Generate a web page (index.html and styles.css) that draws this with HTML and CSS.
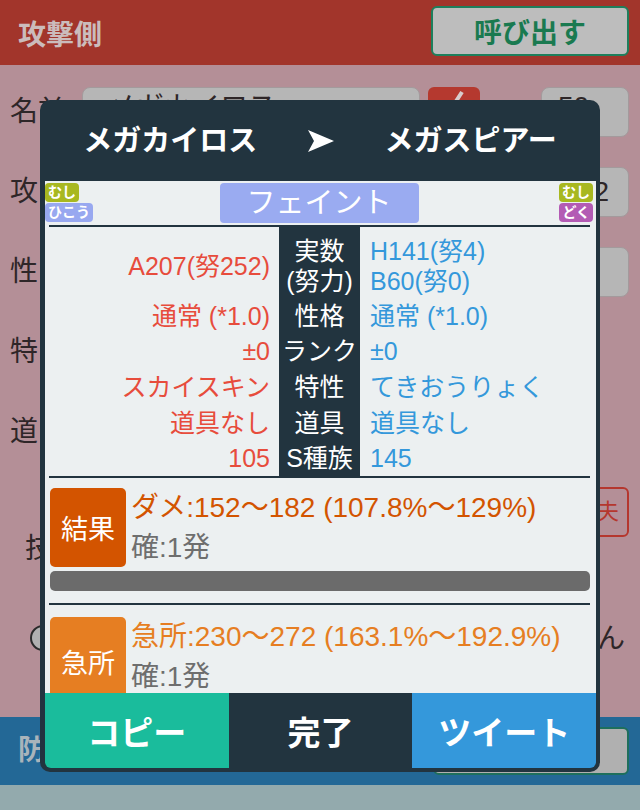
FILE: index.html
```html
<!DOCTYPE html>
<html lang="ja">
<head>
<meta charset="utf-8">
<title>ダメージ計算</title>
<link rel="stylesheet" href="styles.css">
</head>
<body>
<div class="page">
  <header class="topbar">
    <div class="bar-title">攻撃側</div>
    <div class="call-btn">呼び出す</div>
  </header>
  <div class="form">
    <div class="row first">
      <span class="label">名前</span>
      <span class="input name-input">メガカイロス</span>
      <span class="check"><svg width="30" height="30" viewBox="0 0 30 30"><polyline points="6,15 12,22 23,5" fill="none" stroke="#d8cccc" stroke-width="4"/></svg></span>
      <span class="dot">・</span>
      <span class="input small-input lvl">50</span>
    </div>
    <div class="row">
      <span class="label">攻</span>
      <span class="input small-input num">2</span>
    </div>
    <div class="row">
      <span class="label">性</span>
      <span class="input small-input num"></span>
    </div>
    <div class="row"><span class="label">特</span></div>
    <div class="row"><span class="label">道</span></div>
    <div class="move-row">
      <span class="label move-label">技</span>
      <span class="outline-btn">大丈夫</span>
    </div>
    <div class="radio-row">
      <span class="radio"></span>
      <span class="label">ん</span>
    </div>
  </div>
  <div class="defbar">
    <div class="bar-title def-title">防御側</div>
    <div class="call-btn def-btn"></div>
  </div>
  <div class="footer-band"></div>
</div>

<div class="modal">
  <div class="m-head">
    <span>メガカイロス</span>
    <svg class="arrow" width="26" height="22" viewBox="0 0 26 22"><path d="M0 0 L26 11 L0 22 L6 11 Z" fill="#ffffff"/></svg>
    <span>メガスピアー</span>
  </div>
  <div class="m-body">
    <div class="types">
      <div class="type-col">
        <span class="badge bug">むし</span>
        <span class="badge flying">ひこう</span>
      </div>
      <div class="move">フェイント</div>
      <div class="type-col right">
        <span class="badge bug">むし</span>
        <span class="badge poison">どく</span>
      </div>
    </div>
    <div class="rule"></div>
    <div class="stats">
      <div class="atk top"><span>A207(努252)</span></div>
      <div class="key top"><span>実数<br>(努力)</span></div>
      <div class="def top"><span>H141(努4)<br>B60(努0)</span></div>

      <div class="atk"><span>通常 (*1.0)</span></div>
      <div class="key"><span>性格</span></div>
      <div class="def"><span>通常 (*1.0)</span></div>

      <div class="atk"><span>±0</span></div>
      <div class="key"><span>ランク</span></div>
      <div class="def"><span>±0</span></div>

      <div class="atk"><span>スカイスキン</span></div>
      <div class="key"><span>特性</span></div>
      <div class="def"><span>てきおうりょく</span></div>

      <div class="atk"><span>道具なし</span></div>
      <div class="key"><span>道具</span></div>
      <div class="def"><span>道具なし</span></div>

      <div class="atk"><span>105</span></div>
      <div class="key"><span>S種族</span></div>
      <div class="def"><span>145</span></div>
    </div>
    <div class="rule"></div>
    <div class="result">
      <div class="res-main">
        <div class="res-badge">結果</div>
        <div class="res-text">
          <div class="dmg">ダメ:152〜182 (107.8%〜129%)</div>
          <div class="ko">確:1発</div>
        </div>
      </div>
      <div class="hp-bar"></div>
    </div>
    <div class="rule"></div>
    <div class="result crit">
      <div class="res-main">
        <div class="res-badge">急所</div>
        <div class="res-text">
          <div class="dmg">急所:230〜272 (163.1%〜192.9%)</div>
          <div class="ko">確:1発</div>
        </div>
      </div>
    </div>
  </div>
  <div class="m-foot">
    <div class="fbtn copy">コピー</div>
    <div class="fbtn done">完了</div>
    <div class="fbtn tweet">ツイート</div>
  </div>
</div>
</body>
</html>
```

FILE: styles.css
```css
html, body {
  margin: 0;
  padding: 0;
}

body {
  width: 640px;
  height: 810px;
  overflow: hidden;
  position: relative;
  background: #b48f97;
  font-family: "Liberation Sans", "Noto Sans CJK JP", sans-serif;
  color: #2e2628;
}

.page {
  display: flex;
  flex-direction: column;
  height: 810px;
}

/* top bar */
.topbar {
  height: 65px;
  flex: none;
  background: #a2352b;
  display: flex;
  align-items: center;
  justify-content: space-between;
  padding: 0 11px 0 18px;
  box-sizing: border-box;
}

.bar-title {
  font-size: 28px;
  font-weight: bold;
  color: #cbbcbc;
}

.call-btn {
  width: 198px;
  height: 50px;
  box-sizing: border-box;
  border: 2px solid #1e7f5c;
  border-radius: 6px;
  background: #bdbdbd;
  color: #1a7a50;
  font-size: 28px;
  font-weight: bold;
  display: flex;
  align-items: center;
  justify-content: center;
  margin-top: -3px;
}

/* form */
.form {
  height: 652px;
  flex: none;
  padding-top: 7px;
  box-sizing: border-box;
}

.row {
  height: 80px;
  display: flex;
  align-items: center;
  padding: 0 11px 0 10px;
}

.label {
  font-size: 28px;
  line-height: 28px;
  color: #2e2628;
  flex: none;
}

.row .label {
  width: 72px;
}

.input {
  height: 50px;
  box-sizing: border-box;
  background: #b6b6b6;
  border: 1px solid #a39a9c;
  border-radius: 8px;
  font-size: 28px;
  line-height: 48px;
  color: #2e2628;
  flex: none;
}

.name-input {
  width: 338px;
  padding-left: 25px;
  line-height: 40px;
}

.check {
  width: 52px;
  height: 50px;
  margin-left: 8px;
  background: #b5392f;
  border-radius: 6px;
  flex: none;
  display: flex;
  justify-content: center;
}

.dot {
  margin-left: 12px;
  font-size: 20px;
}

.small-input {
  width: 88px;
  margin-left: auto;
}

.lvl {
  padding-left: 16px;
  line-height: 38px;
}

.num {
  text-align: right;
  padding-right: 19px;
}

.move-row {
  height: 110px;
  display: flex;
  justify-content: space-between;
  align-items: flex-start;
  padding: 15px 11px 0 25px;
  box-sizing: border-box;
}

.move-label {
  margin-top: 48px;
}

.outline-btn {
  width: 109px;
  height: 50px;
  box-sizing: border-box;
  border: 2px solid #b5372e;
  border-radius: 6px;
  color: #b5372e;
  font-size: 22px;
  line-height: 46px;
  text-align: right;
  padding-right: 8px;
}

.radio-row {
  height: 135px;
  display: flex;
  align-items: flex-start;
  padding: 43px 15px 0 30px;
  box-sizing: border-box;
}

.radio {
  width: 26px;
  height: 26px;
  box-sizing: border-box;
  border: 2px solid #2a2a2a;
  border-radius: 50%;
  background: #b0b0b0;
}

.radio-row .label {
  margin-left: auto;
}

/* defender bar */
.defbar {
  height: 68px;
  flex: none;
  background: #236896;
  display: flex;
  align-items: center;
  justify-content: space-between;
  padding: 0 11px 0 18px;
  box-sizing: border-box;
}

.def-title {
  color: #a9b4bb;
  margin-top: -6px;
}

.def-btn {
  width: 196px;
  height: 48px;
  background: #b0b0b0;
  border-color: #1e6f5c;
  margin-top: 0;
}

.footer-band {
  flex: 1;
  background: #93aaad;
}

/* modal */
.modal {
  position: absolute;
  top: 100px;
  left: 40px;
  width: 560px;
  height: 672px;
  box-sizing: border-box;
  padding: 0 4px 4px 5px;
  background: #22343f;
  border-radius: 10px;
  display: flex;
  flex-direction: column;
  overflow: hidden;
}

.m-head {
  height: 81px;
  flex: none;
  display: grid;
  grid-template-columns: 1fr 50px 1fr;
  align-items: center;
  justify-items: center;
  color: #ffffff;
  font-size: 29px;
  font-weight: bold;
  line-height: 34px;
}

.arrow {
  display: block;
  margin-top: 1px;
}

.m-body {
  height: 512px;
  flex: none;
  background: #ecf0f1;
  overflow: hidden;
  padding-top: 2px;
  box-sizing: border-box;
}

.types {
  height: 42px;
  display: grid;
  grid-template-columns: 1fr auto 1fr;
  align-items: start;
  padding-right: 3px;
}

.type-col {
  display: flex;
  flex-direction: column;
  align-items: flex-start;
  gap: 1px;
}

.type-col.right {
  align-items: flex-end;
}

.badge {
  display: block;
  font-size: 14px;
  line-height: 19px;
  height: 19px;
  padding: 0 3px;
  border-radius: 4px;
  color: #ffffff;
  font-weight: bold;
  white-space: nowrap;
  overflow: hidden;
}

.bug {
  background: #a8b820;
}

.flying {
  background: #98a8f0;
}

.poison {
  background: #b35bb4;
}

.move {
  width: 199px;
  height: 40px;
  background: #9aabf1;
  border-radius: 4px;
  color: #ffffff;
  font-size: 29px;
  line-height: 40px;
  text-align: center;
}

.rule {
  height: 2px;
  background: #22343f;
  margin: 0 6px 0 4px;
}

.stats {
  display: grid;
  grid-template-columns: 230px 81px 1fr;
  grid-template-rows: 71px repeat(5, 35.6px);
  margin: 0 6px 0 4px;
  font-size: 25px;
  line-height: 30px;
}

.atk,
.key,
.def {
  display: flex;
  align-items: center;
  white-space: nowrap;
}

.atk {
  justify-content: flex-end;
  padding-right: 9px;
  color: #e74c3c;
}

.key {
  justify-content: center;
  text-align: center;
  background: #22343f;
  color: #ffffff;
}

.def {
  padding-left: 10px;
  color: #3498db;
}

.top {
  padding-top: 6px;
  box-sizing: border-box;
}

.result {
  padding: 10px 6px 12px 5px;
}

.result.crit {
  padding-top: 12px;
}

.res-main {
  display: flex;
  align-items: flex-start;
}

.res-badge {
  width: 76px;
  height: 79px;
  flex: none;
  border-radius: 5px;
  background: #d35400;
  color: #ffffff;
  font-size: 27px;
  display: flex;
  align-items: center;
  justify-content: center;
}

.res-text {
  margin-left: 5px;
}

.dmg,
.ko {
  font-size: 28px;
  line-height: 40px;
  white-space: nowrap;
}

.dmg {
  color: #d35400;
}

.ko {
  color: #6e6e6e;
}

.crit .res-badge {
  background: #e67e22;
  height: 90px;
}

.crit .dmg {
  color: #e67e22;
}

.hp-bar {
  margin-top: 3px;
  height: 20px;
  border-radius: 5px;
  background: #6b6b6b;
}

.m-foot {
  height: 75px;
  flex: none;
  display: grid;
  grid-template-columns: 1fr 1fr 1fr;
  border-radius: 0 0 6px 6px;
  overflow: hidden;
}

.fbtn {
  display: flex;
  align-items: center;
  justify-content: center;
  color: #ffffff;
  font-size: 33px;
  font-weight: bold;
}

.copy {
  background: #1abc9c;
}

.done {
  background: #22343f;
}

.tweet {
  background: #3498db;
}
```
